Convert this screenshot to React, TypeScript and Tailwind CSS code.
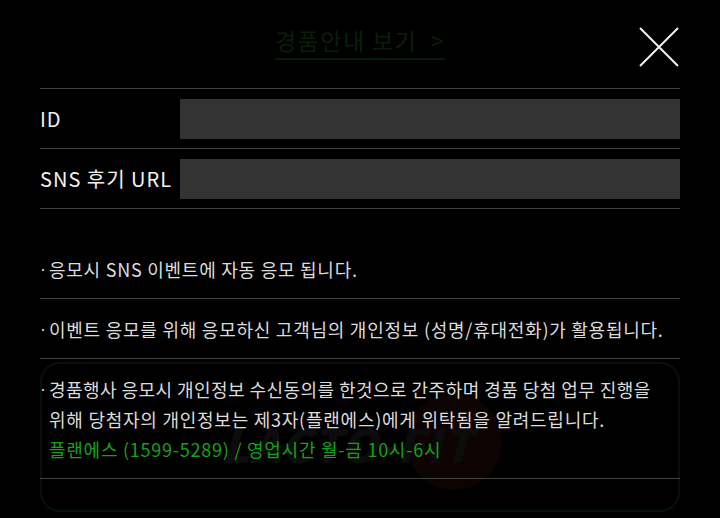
const font = { fontFamily: '"Noto Sans CJK KR", "Noto Sans", sans-serif' };

function CloseIcon() {
  return (
    <svg width="42" height="42" viewBox="0 0 42 42" className="block">
      <path d="M2 2 L40 40 M40 2 L2 40" stroke="#f2f2f2" strokeWidth="2" fill="none" />
    </svg>
  );
}

const notices = [
  '응모시 SNS 이벤트에 자동 응모 됩니다.',
  '이벤트 응모를 위해 응모하신 고객님의 개인정보 (성명/휴대전화)가 활용됩니다.',
];

function Dot() {
  return (
    <span className="inline-block align-top h-[30px] w-[9px] tracking-normal font-['Liberation_Sans',sans-serif]">·</span>
  );
}

export default function App() {
  return (
    <div className="relative w-[720px] h-[518px] overflow-hidden bg-black" style={font}>
      {/* dimmed page behind the popup */}
      <div className="absolute left-[40px] top-[362px] w-[640px] h-[150px] rounded-[20px] border-2 border-[#061206]">
        <div className="absolute left-[364px] top-[30px] w-[96px] h-[96px] rounded-full bg-[#0e0303]" />
        <div className="absolute left-[180px] top-[56px] text-[46px] font-black italic leading-none tracking-[1px] text-[#0c0c0c]">
          LACTO-FIT
        </div>
      </div>

      <div className="relative px-10">
        <div className="relative h-[88px] flex justify-center">
          <a className="mt-[23px] h-[37px] border-b-2 border-[#081a08] text-[23px] leading-[34px] text-[#0a1f0a] tracking-[1.5px]">
            경품안내 보기 &nbsp;&gt;
          </a>
          <button className="absolute right-0 top-[26px]">
            <CloseIcon />
          </button>
        </div>

        <div className="border-t border-[#444]">
          <div className="flex items-center h-[60px] border-b border-[#444]">
            <label className="w-[140px] text-[20px] text-[#f2f2f2] tracking-[1px]">ID</label>
            <input className="flex-1 h-[40px] bg-[#333] outline-none" />
          </div>
          <div className="flex items-center h-[60px] border-b border-[#444]">
            <label className="w-[140px] text-[20px] text-[#f2f2f2] tracking-[1px]">SNS 후기 URL</label>
            <input className="flex-1 h-[40px] bg-[#333] outline-none" />
          </div>
        </div>

        <ul className="mt-[30px] text-[18px] leading-[30px] text-[#dcdcdc] tracking-[0.75px] whitespace-nowrap">
          {notices.map((n) => (
            <li key={n} className="h-[60px] py-[15px] border-b border-[#444]">
              <Dot />
              {n}
            </li>
          ))}
          <li className="h-[120px] py-[15px] border-b border-[#444]">
            <Dot />
            <span className="tracking-[0.45px]">경품행사 응모시 개인정보 수신동의를 한것으로 간주하며 경품 당첨 업무 진행을</span>
            <br />
            <span className="pl-[9px]">위해 당첨자의 개인정보는 제3자(플랜에스)에게 위탁됨을 알려드립니다.</span>
            <br />
            <span className="pl-[9px] text-[#17a117]">플랜에스 (1599-5289) / 영업시간 월-금 10시-6시</span>
          </li>
        </ul>
      </div>
    </div>
  );
}
